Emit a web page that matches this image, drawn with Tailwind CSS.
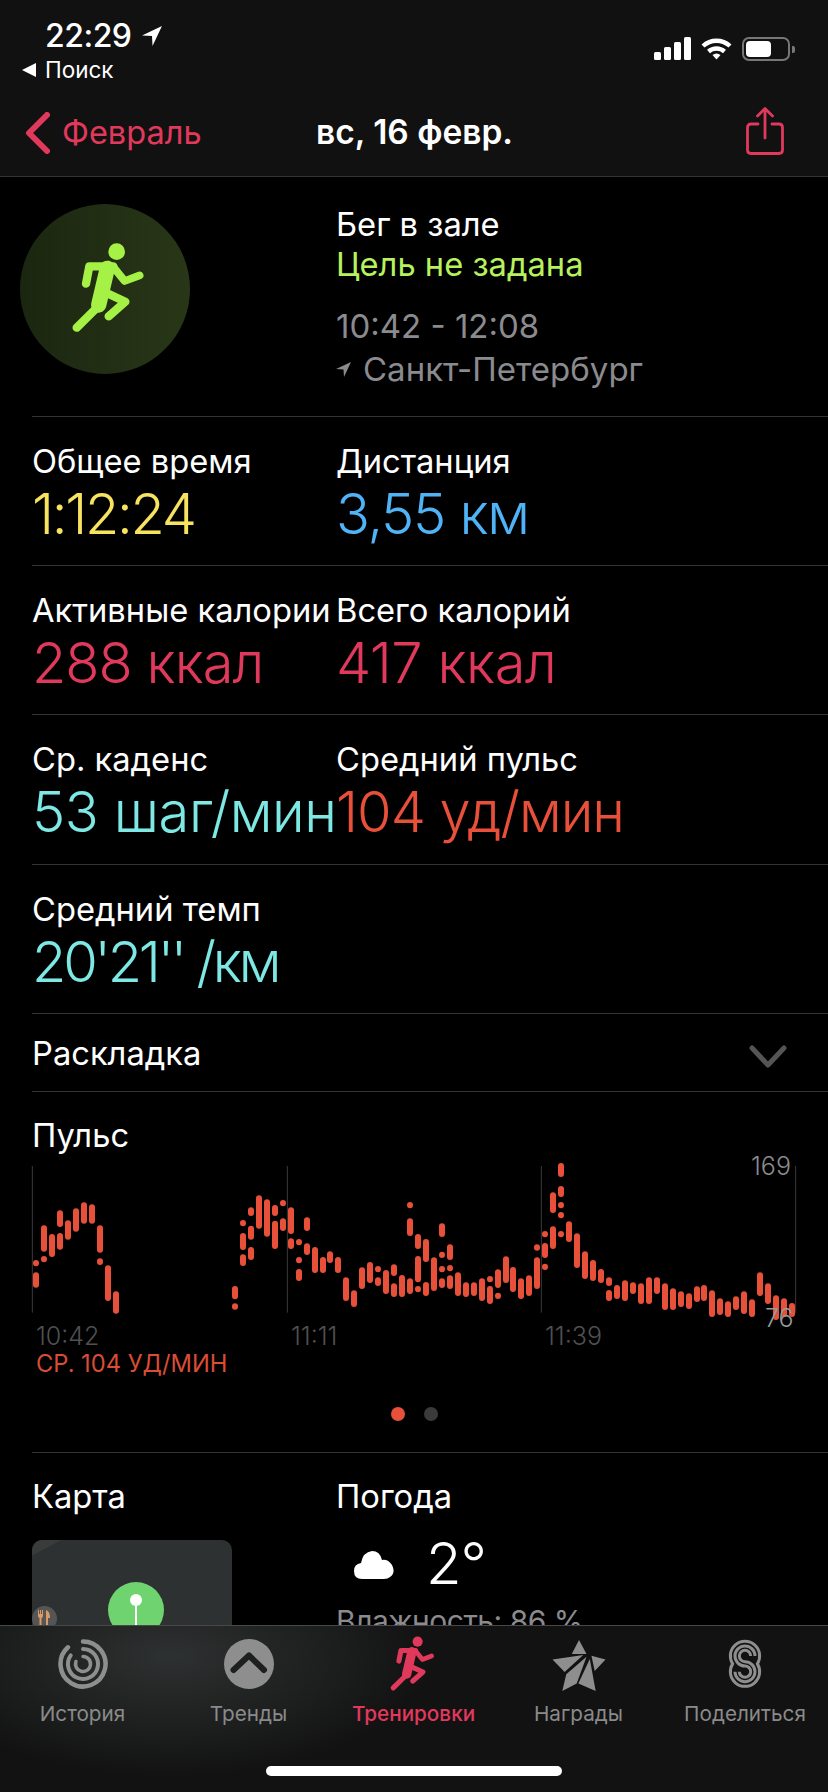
<!DOCTYPE html>
<html lang="ru">
<head>
<meta charset="utf-8">
<script src="https://cdn.jsdelivr.net/npm/@tailwindcss/browser@4"></script>
</head>
<body class="bg-black">
<svg class="hidden" width="0" height="0">
  <symbol id="runner" viewBox="0 0 330 330">
    <circle cx="200" cy="62" r="25" fill="currentColor"/>
    <g fill="none" stroke="currentColor" stroke-linecap="round" stroke-linejoin="round">
      <path d="M108 158 L118 106 L190 106" stroke-width="25"/>
      <path d="M190 108 L224 150 L269 133" stroke-width="23"/>
      <path d="M172 112 L146 222" stroke-width="46"/>
      <path d="M136 235 L80 290" stroke-width="25"/>
      <path d="M165 184 L226 212 L176 256" stroke-width="25"/>
    </g>
  </symbol>
</svg>
<div class="relative w-[828px] h-[1792px] overflow-hidden bg-black text-white font-['Inter',sans-serif]">

  <!-- status + nav -->
  <header class="h-[177px] bg-[#111111] border-b border-[#333335] flex flex-col">
    <div class="h-[90px] px-[22px] pt-[20px] flex justify-between">
      <div>
        <div class="flex items-center pl-[23px] gap-[9px] h-[32px]">
          <span class="text-[32px] leading-[32px] tracking-[-0.5px] font-medium">22:29</span>
          <svg class="w-[22px] h-[22px]" viewBox="0 0 21 21"><path d="M20 1 L1 10 L10.5 10.5 L11 20 Z" fill="#fff"/></svg>
        </div>
        <div class="flex items-center gap-[9px] h-[26px] mt-[5px]">
          <svg class="w-[14px] h-[14px]" viewBox="0 0 14 14"><path d="M14 0 V14 L0 7 Z" fill="#fff"/></svg>
          <span class="text-[22.500px] leading-[26px]">Поиск</span>
        </div>
      </div>
      <div class="flex items-start gap-[10px] pt-[17px] pr-[11px]">
        <div class="flex items-end gap-[3px] h-[23px]">
          <div class="w-[7px] h-[8px] bg-white rounded-[1.5px]"></div>
          <div class="w-[7px] h-[13px] bg-white rounded-[1.5px]"></div>
          <div class="w-[7px] h-[18px] bg-white rounded-[1.5px]"></div>
          <div class="w-[7px] h-[23px] bg-white rounded-[1.5px]"></div>
        </div>
        <svg class="w-[31px] h-[23px]" viewBox="0 0 31 23" fill="none" stroke="#fff" stroke-width="4.4"><path d="M2 9 A20 20 0 0 1 29 9"/><path d="M7.5 14.5 A12 12 0 0 1 23.500 14.500"/><path d="M11.500 18 L15.500 22.500 L19.500 18 A6 6 0 0 0 11.500 18 Z" fill="#fff" stroke="none"/></svg>
        <div class="flex items-center gap-[2px]">
          <div class="w-[48px] h-[24px] rounded-[7px] border-2 border-[#777] p-[2px]"><div class="w-[25px] h-full bg-white rounded-[4px]"></div></div>
          <div class="w-[3px] h-[7px] bg-[#777] rounded-r-[2px]"></div>
        </div>
      </div>
    </div>
    <div class="relative flex-1 flex items-center justify-between pl-[25px] pr-[44px]">
      <div class="flex items-center gap-[12px]">
        <svg class="w-[25px] h-[42px]" viewBox="0 0 25 42" fill="none" stroke="#e0395c" stroke-width="6" stroke-linecap="round" stroke-linejoin="round"><path d="M22 3 L4 21 L22 39"/></svg>
        <span class="text-[32.500px] leading-[36px] text-[#e0395c]">Февраль</span>
      </div>
      <span class="absolute left-[316px] top-[24px] text-[33.500px] leading-[36px] font-semibold">вс, 16 февр.</span>
      <svg class="w-[38px] h-[48px] -mt-[4px]" viewBox="0 0 38 48" fill="none" stroke="#e0395c" stroke-width="2.800" stroke-linecap="round" stroke-linejoin="round"><path d="M12 17 H5 Q1.500 17 1.500 20.500 V43 Q1.500 46.500 5 46.500 H33 Q36.500 46.500 36.500 43 V20.500 Q36.500 17 33 17 H26"/><path d="M19 31 V2 M11.500 9 L19 1.500 L26.500 9"/></svg>
    </div>
  </header>

  <!-- workout hero -->
  <section class="ml-[32px] h-[240px] border-b border-[#333335] grid grid-cols-[304px_1fr]">
    <div class="relative">
      <div class="absolute -left-[12px] top-[27px] w-[170px] h-[170px] rounded-full bg-linear-to-r from-[#1b2610] to-[#293718] text-[#a6f146] flex items-center justify-center">
        <svg class="w-[110px] h-[110px] -mt-[6px]"><use href="#runner"/></svg>
      </div>
    </div>
    <div class="pt-[27px]">
      <div class="text-[32.700px] leading-[40px]">Бег в зале</div>
      <div class="text-[32.700px] leading-[40px] text-[#b6f25e]">Цель не задана</div>
      <div class="mt-[20px] text-[33px] leading-[44px] text-[#8b8b8f]">10:42 - 12:08</div>
      <div class="flex items-center gap-[12px] text-[33px] leading-[42px] text-[#8b8b8f]">
        <svg class="w-[15px] h-[15px]" viewBox="0 0 15 15"><path d="M15 0 L0 7 L7.500 7.500 L8 15 Z" fill="#8b8b8f"/></svg>
        <span>Санкт-Петербург</span>
      </div>
    </div>
  </section>

  <!-- metrics -->
  <section class="ml-[32px] h-[149px] border-b border-[#333335] grid grid-cols-[304px_1fr] pt-[24px]">
    <div><div class="text-[32.700px] leading-[40px]">Общее время</div><div class="text-[56px] leading-[60px] tracking-[-2.300px] font-light text-[#f7e35f] mt-[3px]">1:12:24</div></div>
    <div><div class="text-[32.700px] leading-[40px]">Дистанция</div><div class="text-[56px] leading-[60px] tracking-[-1.300px] font-light text-[#4fb3f6] mt-[3px]">3,55 км</div></div>
  </section>
  <section class="ml-[32px] h-[149px] border-b border-[#333335] grid grid-cols-[304px_1fr] pt-[24px]">
    <div><div class="text-[32.700px] leading-[40px] whitespace-nowrap">Активные калории</div><div class="text-[56px] leading-[60px] tracking-[-1px] font-light text-[#e0395c] mt-[3px]">288 ккал</div></div>
    <div><div class="text-[32.700px] leading-[40px]">Всего калорий</div><div class="text-[56px] leading-[60px] tracking-[-0.5px] font-light text-[#e0395c] mt-[3px]">417 ккал</div></div>
  </section>
  <section class="ml-[32px] h-[150px] border-b border-[#333335] grid grid-cols-[304px_1fr] pt-[24px]">
    <div><div class="text-[32.700px] leading-[40px]">Ср. каденс</div><div class="text-[56px] leading-[60px] tracking-[-0.4px] font-light text-[#7de8e4] mt-[3px] whitespace-nowrap">53 шаг/мин</div></div>
    <div><div class="text-[32.700px] leading-[40px]">Средний пульс</div><div class="text-[56px] leading-[60px] tracking-[-1px] font-light text-[#e8503a] mt-[3px] whitespace-nowrap">104 уд/мин</div></div>
  </section>
  <section class="ml-[32px] h-[149px] border-b border-[#333335] pt-[24px]">
    <div class="text-[32.700px] leading-[40px]">Средний темп</div>
    <div class="text-[56px] leading-[60px] tracking-[-3.200px] font-light text-[#7de8e4] mt-[3px]">20'21'' /км</div>
  </section>
  <section class="ml-[32px] h-[78px] border-b border-[#333335] flex items-center justify-between pr-[41px]">
    <span class="text-[32.700px] leading-[40px]">Раскладка</span>
    <svg class="w-[38px] h-[23px] mt-[8px]" viewBox="0 0 38 23" fill="none" stroke="#555" stroke-width="5" stroke-linecap="round" stroke-linejoin="round"><path d="M3 3 L19 20 L35 3"/></svg>
  </section>

  <!-- chart -->
  <section>
    <div class="pl-[32px] h-[58px] pt-[23px] text-[32.700px] leading-[40px]">Пульс</div>
    <div class="relative h-[260px] -mt-[20px]">
      <svg class="w-[828px] h-[260px]" viewBox="0 0 2484 780" fill="none">
        <g stroke="#3a3a3c" stroke-width="3"><path d="M97 108 V548 M862 108 V548 M1624 108 V548 M2387 108 V548"/></g>
        <g stroke="#e8503a" stroke-width="18" stroke-linecap="round">
          <path d="M108 399V399.500 M108 436V464 M132 295V356 M132 387V387.500 M156 321V372 M180 250V282 M180 318V350 M204 280V320 M228 244V296 M252 226V272 M276 232V272 M300 295V359 M300 394V396 M324 415V504 M348 493V542 M705 477V499 M705 529V530 M729 279V280 M729 318V351 M729 382V399 M753 241V249 M753 296V320 M753 360V381 M777 205V287 M801 217V311 M825 234V249 M825 281V348 M849 219V220 M849 274V294 M873 241V303 M873 334V348 M897 336V337 M897 390V391 M897 426V444 M921 271V294 M921 349V366 M945 360V420 M969 390V420 M990 373V390 M1014 390V420 M1038 451V504 M1062 490V522 M1086 421V468 M1110 405V450 M1134 417V418 M1134 451V459 M1158 429V483 M1182 412V429 M1182 469V492 M1206 444V492 M1230 225V226 M1230 274V309 M1230 454V483"/>
          <g transform="translate(1230 0)">
            <path d="M24 321V348 M24 387V448 M24 477V478 M48 336V387 M48 465V489 M72 391V474 M96 289V312 M96 374V375 M96 417V418 M96 454V465 M120 352V381 M120 414V415 M120 445V468 M144 436V489 M168 466V492 M192 466V489 M216 454V504 M240 447V448 M240 477V513 M264 427V465 M264 497V498 M288 388V450 M309 420V477 M333 454V498 M357 445V489 M381 352V353 M381 391V468 M405 312V313 M405 348V375 M405 410V411 M429 196V240 M429 298V348 M453 108V132 M453 177V192 M453 225V226 M453 255V256 M453 312V313 M477 283V327 M501 319V405 M525 373V438 M549 399V444 M573 426V450 M597 451V459 M597 489V504 M621 474V498 M645 460V504 M669 466V483 M693 469V513 M717 451V513 M741 451V483 M765 469V531 M789 484V531 M813 493V522 M837 499V528 M861 478V507 M882 474V504 M906 490V552 M930 514V546 M954 523V552 M978 508V531 M1002 493V543 M1026 517V552 M1050 436V489 M1074 469V513 M1098 505V561 M1122 514V552 M1146 528V552"/>
          </g>
        </g>
      </svg>
      <span class="absolute left-[36px] top-[192px] text-[25px] leading-[28px] font-light text-[#505052]">10:42</span>
      <span class="absolute left-[291px] top-[192px] text-[25px] leading-[28px] font-light text-[#505052]">11:11</span>
      <span class="absolute left-[545px] top-[192px] text-[25px] leading-[28px] font-light text-[#505052]">11:39</span>
      <span class="absolute left-[751px] top-[22px] text-[25px] leading-[28px] font-light text-[#8b8b8f]">169</span>
      <span class="absolute left-[765px] top-[174px] text-[25px] leading-[28px] font-light text-[#9a9a9e]">76</span>
      <span class="absolute left-[36px] top-[220px] text-[23.700px] leading-[28px] text-[#d94c36]">СР. 104 УД/МИН</span>
    </div>
    <div class="flex justify-center gap-[19px] pl-[1px] pt-[17px] h-[62px]">
      <div class="w-[14px] h-[14px] rounded-full bg-[#e8503a]"></div>
      <div class="w-[14px] h-[14px] rounded-full bg-[#3a3a3c]"></div>
    </div>
  </section>

  <!-- map + weather -->
  <section class="ml-[32px] border-t border-[#333335] grid grid-cols-[304px_1fr] pt-[23px]">
    <div>
      <div class="text-[32.700px] leading-[40px]">Карта</div>
      <div class="relative mt-[24px] w-[200px] h-[120px] rounded-[10px] bg-[#2e3131] overflow-hidden">
        <div class="absolute left-0 top-0 w-[36px] h-[16px] bg-[#3a3c3c] -skew-y-[28deg] -translate-y-[10px]"></div>
        <div class="absolute left-[76px] top-[42px] w-[56px] h-[56px] rounded-full bg-[#6fd46f]"></div>
        <div class="absolute left-[98px] top-[54px] w-[12px] h-[12px] rounded-full bg-white"></div>
        <div class="absolute left-[103px] top-[64px] w-[2px] h-[30px] bg-white"></div>
        <div class="absolute left-0 top-[66px] w-[25px] h-[25px] rounded-full bg-[#555] flex items-start justify-center pt-[4px]">
          <svg class="w-[16px] h-[16px]" viewBox="0 0 16 16" fill="#d99a66"><path d="M1 0 H2 V4 H3 V0 H4 V4 H5 V0 H6 V6 Q6 7.500 4.500 8 V16 H2.500 V8 Q1 7.500 1 6 Z M9 16 V0 Q13 1 13 8 H11 V16 Z"/></svg>
        </div>
      </div>
    </div>
    <div>
      <div class="text-[32.700px] leading-[40px]">Погода</div>
      <div class="flex items-center h-[64px] mt-[15px] pl-[18px] gap-[32px]">
        <svg class="w-[40px] h-[28px] mt-[3px]" viewBox="0 0 40 28" fill="#fff"><path d="M8 28 Q0 28 0 20 Q0 13 7 12 Q9 1 18 0 Q26 0 28 9 Q34 8 38 14 Q42 22 36 26 Q34 28 30 28 Z"/></svg>
        <span class="text-[58px] leading-[64px] font-light tracking-[-1px]">2°</span>
      </div>
      <div class="mt-[6px] text-[30px] leading-[40px] tracking-[-0.5px] text-[#8b8b8f]">Влажность: 86 %</div>
    </div>
  </section>

  <!-- tab bar -->
  <nav class="absolute left-0 top-[1625px] w-[828px] h-[167px] border-t border-[#48484a] bg-[#121212] bg-[radial-gradient(ellipse_260px_120px_at_170px_30px,#2e3131,#121212)]">
    <div class="grid grid-cols-[165px_167px_163px_167px_166px]">
      <div class="flex flex-col items-center">
        <div class="h-[76px] pt-[13px]"><svg class="w-[50px] h-[50px]" viewBox="0 0 50 50" fill="none" stroke="#8e8e8e" stroke-linecap="round"><path stroke-width="4.500" d="M25 2.500 A22.500 22.500 0 1 1 9.950 8.280"/><path stroke-width="4" d="M25 10 A15 15 0 1 1 12.700 16.400"/><path stroke-width="3.500" d="M25 17.500 A7.500 7.500 0 1 1 17.950 22.430"/></svg></div>
        <span class="text-[20.700px] leading-[24px] text-[#8a8a8a]">История</span>
      </div>
      <div class="flex flex-col items-center">
        <div class="h-[76px] pt-[13px]"><svg class="w-[50px] h-[50px]" viewBox="0 0 50 50"><circle cx="25" cy="25" r="25" fill="#8e8e8e"/><path d="M9.500 31 L25 16.500 L40 31" fill="none" stroke="#1e1f1f" stroke-width="6" stroke-linecap="round" stroke-linejoin="round"/></svg></div>
        <span class="text-[20.700px] leading-[24px] text-[#8a8a8a]">Тренды</span>
      </div>
      <div class="flex flex-col items-center text-[#e0395c]">
        <div class="h-[76px] pt-[3px] -ml-[7px]"><svg class="w-[67px] h-[67px]"><use href="#runner"/></svg></div>
        <span class="text-[20.700px] leading-[24px] font-medium text-[#e0395c] whitespace-nowrap">Тренировки</span>
      </div>
      <div class="flex flex-col items-center">
        <div class="h-[76px] pt-[13px]"><svg class="w-[56px] h-[53px]" viewBox="33 24 168 162" fill="#8e8e8e"><path d="M117 27 L140 70 H95 Z M36 87 L130 73 L73 125 Z M66 183 L78 132 L140 78 L110 160 Z M115 160 L150 85 L168 183 Z M155 75 L198 87 L165 122 Z"/></svg></div>
        <span class="text-[20.700px] leading-[24px] text-[#8a8a8a]">Награды</span>
      </div>
      <div class="flex flex-col items-center">
        <div class="h-[76px] pt-[13px]"><svg class="w-[34px] h-[50px]" viewBox="564 24 102 150" fill="none" stroke="#8e8e8e" stroke-width="9"><path d="M577.800 98.500 A44 44 0 1 1 652.200 98.500 A44 44 0 1 1 577.800 98.500 Z"/><path d="M645 75 A30 30 0 1 0 615 105 A17 17 0 1 1 598 122"/><path transform="rotate(180 615 98.500)" d="M645 75 A30 30 0 1 0 615 105 A17 17 0 1 1 598 122"/></svg></div>
        <span class="text-[20.700px] leading-[24px] text-[#8a8a8a] whitespace-nowrap">Поделиться</span>
      </div>
    </div>
    <div class="absolute left-[266px] top-[140px] w-[296px] h-[10px] rounded-full bg-white"></div>
  </nav>
</div>
</body>
</html>
